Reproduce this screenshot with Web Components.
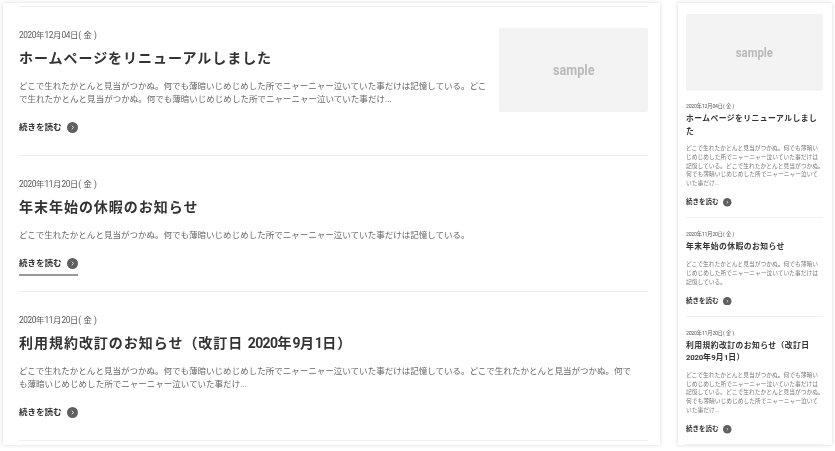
<!DOCTYPE html>
<html lang="ja">
<head>
<meta charset="utf-8">
<title>news</title>
<style>
  html, body { margin: 0; padding: 0; background: #fff; }
  body { font-family: Roboto, "Noto Sans CJK JP", sans-serif; overflow: hidden; }
</style>
</head>
<body>
<news-page></news-page>

<script>
const SHORT = "どこで生れたかとんと見当がつかぬ。何でも薄暗いじめじめした所でニャーニャー泣いていた事だけは記憶している。";
const LONG = SHORT + "どこで生れたかとんと見当がつかぬ。何でも薄暗いじめじめした所でニャーニャー泣いていた事だけ...";

const mainPosts = [
  { date: "2020年12月04日( 金 )", title: "ホームページをリニューアルしました", body: LONG, thumb: true },
  { date: "2020年11月20日( 金 )", title: "年末年始の休暇のお知らせ", body: SHORT, hover: true },
  { date: "2020年11月20日( 金 )", title: "利用規約改訂のお知らせ（改訂日 2020年9月1日）", body: LONG }
];
const sidePosts = [
  { date: "2020年12月04日( 金 )", title: "ホームページをリニューアルしました", body: LONG },
  { date: "2020年11月20日( 金 )", title: "年末年始の休暇のお知らせ", body: SHORT },
  { date: "2020年11月20日( 金 )", title: "利用規約改訂のお知らせ（改訂日 2020年9月1日）", body: LONG }
];

// digits are condensed in the original
const nums = s => s.replace(/\d+/g, m => `<span class="n">${m}</span>`);

// in the narrow column the last full stop of a long text sits at a line end, its right half is trimmed
const trimStop = s => {
  if (s === SHORT) return s;
  const i = s.lastIndexOf("。");
  return s.slice(0, i) + '<span class="stop">。</span>' + s.slice(i + 1);
};

class SampleThumb extends HTMLElement {
  constructor() {
    super();
    this.shadowDOM = this.attachShadow({mode: "open"});
    this.shadowDOM.innerHTML = `
      <style>
        :host {
          display: flex;
          align-items: center;
          justify-content: center;
          background: #f3f3f3;
          border-radius: 2px;
          color: #b9b9b9;
          font-weight: 700;
        }
        span { display: block; transform: scaleX(.87); }
      </style>
      <span>sample</span>`;
  }
}
customElements.define("sample-thumb", SampleThumb);

class ReadMore extends HTMLElement {
  constructor() {
    super();
    this.shadowDOM = this.attachShadow({mode: "open"});
    this.shadowDOM.innerHTML = `
      <style>
        :host {
          display: inline-flex;
          align-items: center;
          gap: var(--more-gap, 5px);
          color: #333;
          font-weight: 700;
          white-space: nowrap;
        }
        svg { width: var(--more-icon, 11px); height: var(--more-icon, 11px); display: block; }
      </style>
      <slot></slot>
      <svg viewBox="0 0 22 22"><circle cx="11" cy="11" r="11" fill="#5f5f5f"/><path d="M9.5 7.5 13 11l-3.500 3.500" fill="none" stroke="#fff" stroke-width="1.600"/></svg>`;
  }
}
customElements.define("read-more", ReadMore);

class MainPost extends HTMLElement {
  constructor() {
    super();
    this.shadowDOM = this.attachShadow({mode: "open"});
  }

  set post(post) {
    this._post = post;
    this.render();
  }

  render() {
    const p = this._post;
    this.shadowDOM.innerHTML = `
      <style>
        :host {
          display: flex;
          gap: 12px;
          padding: 21px 0 15px;
          border-bottom: 1px solid #f0f0f0;
        }
        .text { flex: 1; min-width: 0; padding: 1px 12px 0 0; }
        :host(.with-thumb) .text { padding-right: 0; }
        .date { font-size: 8.300px; line-height: 13px; color: #555; letter-spacing: .1px; }
        .date .n { letter-spacing: -.4px; }
        h2 {
          margin: 5px 0 0;
          font-size: 14px;
          line-height: 22px;
          letter-spacing: .97px;
          font-weight: 700;
          color: #333;
        }
        h2 .n { letter-spacing: -.6px; }
        p {
          margin: 11px 0 0;
          font-size: 8.520px;
          line-height: 13px;
          color: #666;
        }
        .more {
          display: inline-block;
          margin-top: 15px;
          padding-bottom: 4px;
          border-bottom: 2px solid transparent;
          font-size: 8.5px;
          line-height: 13px;
        }
        .more.hover { border-bottom-color: #999; }
        sample-thumb {
          flex: none;
          width: 149px;
          height: 84px;
          font-size: 14.5px;
        }
      </style>
      <div class="text">
        <div class="date">${nums(p.date)}</div>
        <h2>${nums(p.title)}</h2>
        <p>${p.body}</p>
        <div class="more ${p.hover ? "hover" : ""}"><read-more>続きを読む</read-more></div>
      </div>
      ${p.thumb ? "<sample-thumb></sample-thumb>" : ""}`;
    this.classList.toggle("with-thumb", !!p.thumb);
  }
}
customElements.define("main-post", MainPost);

class SidePost extends HTMLElement {
  constructor() {
    super();
    this.shadowDOM = this.attachShadow({mode: "open"});
  }

  set post(post) {
    this._post = post;
    this.render();
  }

  render() {
    const p = this._post;
    this.shadowDOM.innerHTML = `
      <style>
        :host {
          display: block;
          padding: 13px 0 10px;
          border-bottom: 1px solid #f0f0f0;
          --more-gap: 4.500px;
          --more-icon: 8.500px;
        }
        .date { font-size: 5.200px; line-height: 7px; color: #555; }
        .date .n { letter-spacing: -.25px; }
        h3 {
          margin: 3px 0 0;
          font-size: 7.800px;
          line-height: 12.500px;
          letter-spacing: .45px;
          font-weight: 700;
          color: #333;
        }
        h3 .n { letter-spacing: -.2px; }
        p {
          margin: 6px 0 0;
          font-size: 5.750px;
          line-height: 8.800px;
          color: #777;
        }
        .stop { letter-spacing: -.5em; }
        .more { margin-top: 9.500px; font-size: 6.500px; line-height: 10px; }
      </style>
      <div class="date">${nums(p.date)}</div>
      <h3>${nums(p.title)}</h3>
      <p>${trimStop(p.body)}</p>
      <div class="more"><read-more>続きを読む</read-more></div>`;
  }
}
customElements.define("side-post", SidePost);

class NewsPage extends HTMLElement {
  constructor() {
    super();
    this.shadowDOM = this.attachShadow({mode: "open"});
    this.shadowDOM.innerHTML = `
      <style>
        :host {
          display: grid;
          grid-template-columns: 657px 154px;
          gap: 18px;
          padding: 3px 3px 6px;
          height: 442px;
          filter: blur(.3px);
        }
        .card {
          background: #fff;
          box-shadow: 0 0 4px rgba(0, 0, 0, .16);
          overflow: hidden;
        }
        .main { padding: 3px 12px 0 16px; }
        .main .first { height: 0; border-top: 1px solid #f0f0f0; }
        .side { padding: 11px 9px 0 8px; }
        .side sample-thumb { height: 77px; margin-bottom: -1px; font-size: 13px; }
      </style>
      <section class="card main"><div class="first"></div></section>
      <aside class="card side"><sample-thumb></sample-thumb></aside>`;

    const main = this.shadowDOM.querySelector(".main");
    mainPosts.forEach(post => {
      const el = document.createElement("main-post");
      el.post = post;
      main.appendChild(el);
    });

    const side = this.shadowDOM.querySelector(".side");
    sidePosts.forEach(post => {
      const el = document.createElement("side-post");
      el.post = post;
      side.appendChild(el);
    });
  }
}
customElements.define("news-page", NewsPage);
</script>
</body>
</html>
